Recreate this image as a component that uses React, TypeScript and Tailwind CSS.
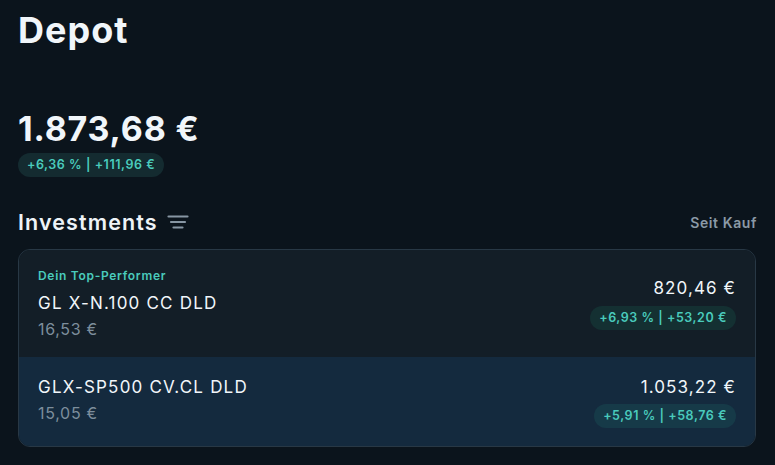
import React from "react";

const positions = [
  {
    label: "Dein Top-Performer",
    name: "GL X-N.100 CC DLD",
    price: "16,53 €",
    value: "820,46 €",
    perf: "+6,93 % | +53,20 €",
    highlight: false,
  },
  {
    label: "",
    name: "GLX-SP500 CV.CL DLD",
    price: "15,05 €",
    value: "1.053,22 €",
    perf: "+5,91 % | +58,76 €",
    highlight: true,
  },
];

const FilterIcon: React.FC = () => (
  <svg width="22" height="16" viewBox="0 0 22 16" fill="none">
    <path d="M1.5 2.5h19M4 8h14M6.5 13.5h9" stroke="#8796a3" strokeWidth="2.2" strokeLinecap="round" />
  </svg>
);

const App: React.FC = () => {
  return (
    <div
      className="w-[775px] h-[465px] bg-[#0b141c] text-white overflow-hidden"
      style={{ fontFamily: "Inter, 'Noto Sans', sans-serif" }}>
      <div className="px-[18px] pt-[8px]">
        <h1 className="text-[36px] font-bold leading-[44px] tracking-[1px] text-[#f1f6fa]">Depot</h1>

        <div className="mt-[57px]">
          <div className="text-[34px] font-bold leading-[40px] tracking-[0.8px] text-[#f1f6fa]">1.873,68 €</div>
          <span className="inline-block mt-[4px] px-[9px] h-[24px] leading-[24px] rounded-full bg-[#142b30] text-[12.5px] font-semibold tracking-[0.55px] text-[#4acbbc]">
            +6,36 % | +111,96 €
          </span>
        </div>

        <div className="mt-[30px] flex items-center justify-between">
          <div className="flex items-center gap-[9px]">
            <h2 className="text-[21.5px] font-semibold leading-[30px] tracking-[1.1px] text-[#eef3f7]">Investments</h2>
            <FilterIcon />
          </div>
          <span className="text-[14px] font-semibold tracking-[0.6px] text-[#8b9aa6]">Seit Kauf</span>
        </div>

        <div className="mt-[12px] w-[738px] rounded-[12px] border border-[#283845] overflow-hidden">
          {positions.map((p, i) => (
            <div
              key={i}
              className={
                p.highlight
                  ? "flex justify-between items-start bg-[#142a3e] px-[19px] pt-[16px] h-[89px]"
                  : "flex justify-between items-start bg-[#131e27] px-[19px] pt-[17px] h-[107px]"
              }>
              <div>
                {p.label && (
                  <div className="text-[12px] font-semibold leading-[18px] tracking-[0.7px] text-[#4acbbc]">{p.label}</div>
                )}
                <div
                  className={
                    p.label
                      ? "mt-[7px] text-[17px] leading-[22px] tracking-[1.2px] text-[#f1f6fa]"
                      : "mt-[3px] text-[17px] leading-[22px] tracking-[1.2px] text-[#f1f6fa]"
                  }>
                  {p.name}
                </div>
                <div className="mt-[4px] text-[16px] leading-[22px] tracking-[0.7px] text-[#7d8e9c]">{p.price}</div>
              </div>
              <div className={p.label ? "flex flex-col items-end pt-[10px]" : "flex flex-col items-end pt-[3px]"}>
                <div className="text-[17px] leading-[22px] tracking-[1.1px] text-[#f1f6fa]">{p.value}</div>
                <span
                  className={
                    p.highlight
                      ? "mt-[6px] px-[9px] h-[24px] leading-[24px] rounded-full bg-[#163a48] text-[12.5px] font-semibold tracking-[0.55px] text-[#4acbbc]"
                      : "mt-[7px] px-[9px] h-[24px] leading-[24px] rounded-full bg-[#143032] text-[12.5px] font-semibold tracking-[0.55px] text-[#4acbbc]"
                  }>
                  {p.perf}
                </span>
              </div>
            </div>
          ))}
        </div>
      </div>
    </div>
  );
};

export default App;
